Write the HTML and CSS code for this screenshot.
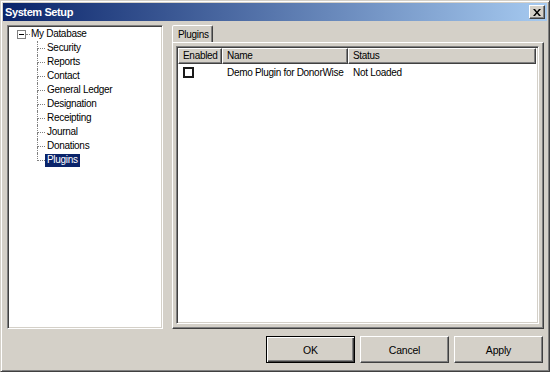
FILE: index.html
```html
<!DOCTYPE html>
<html lang="en">
<head>
  <meta charset="UTF-8">
  <title>System Setup</title>
  <link rel="stylesheet" href="styles.css">
</head>
<body>
  <div class="window">
    <div class="titlebar">
      <span class="title">System Setup</span>
      <button class="close" type="button">
        <svg width="8" height="7" viewBox="0 0 8 7">
          <path d="M0 0h2l2 2.5L6 0h2L5 3.5 8 7H6L4 4.5 2 7H0l3-3.5z" fill="#000"/>
        </svg>
      </button>
    </div>

    <div class="main">
      <div class="tree">
        <div class="root">
          <span class="expander"></span>
          <span class="stub"></span>
          <span class="label">My Database</span>
        </div>
        <ul class="children">
          <li><span class="branch"><i></i><i></i></span><span class="label">Security</span></li>
          <li><span class="branch"><i></i><i></i></span><span class="label">Reports</span></li>
          <li><span class="branch"><i></i><i></i></span><span class="label">Contact</span></li>
          <li><span class="branch"><i></i><i></i></span><span class="label">General Ledger</span></li>
          <li><span class="branch"><i></i><i></i></span><span class="label">Designation</span></li>
          <li><span class="branch"><i></i><i></i></span><span class="label">Receipting</span></li>
          <li><span class="branch"><i></i><i></i></span><span class="label">Journal</span></li>
          <li><span class="branch"><i></i><i></i></span><span class="label">Donations</span></li>
          <li class="last"><span class="branch"><i></i><i></i></span><span class="label selected">Plugins</span></li>
        </ul>
      </div>

      <div class="tabs">
        <div class="tabstrip">
          <div class="tab">Plugins</div>
        </div>
        <div class="tabpanel">
          <div class="listview">
            <div class="lv-header">
              <div class="col col-enabled">Enabled</div>
              <div class="col col-name">Name</div>
              <div class="col col-status">Status</div>
            </div>
            <div class="lv-row">
              <div class="cell col-enabled"><span class="check"></span></div>
              <div class="cell col-name">Demo Plugin for DonorWise</div>
              <div class="cell col-status">Not Loaded</div>
            </div>
          </div>
        </div>
      </div>
    </div>

    <div class="footer">
      <button class="btn default" type="button">OK</button>
      <button class="btn" type="button">Cancel</button>
      <button class="btn" type="button">Apply</button>
    </div>
  </div>
</body>
</html>
```

FILE: styles.css
```css
body {
  margin: 0;
  padding: 0;
  font-family: "Liberation Sans", Arial, sans-serif;
  font-size: 10px;
  letter-spacing: -0.3px;
  color: #000;
}

.window {
  box-sizing: border-box;
  width: 550px;
  height: 372px;
  background: #d4d0c8;
  border: 1px solid;
  border-color: #d4d0c8 #404040 #404040 #d4d0c8;
  box-shadow: inset 1px 1px #fff, inset -1px -1px #808080;
  padding: 2px;
  display: flex;
  flex-direction: column;
}

/* title bar */
.titlebar {
  height: 18px;
  display: flex;
  align-items: center;
  justify-content: space-between;
  padding: 0 2px 0 2px;
  background: linear-gradient(to right, #0a246a, #a6caf0);
}

.title {
  color: #fff;
  font-weight: bold;
  font-size: 11px;
  letter-spacing: -0.4px;
}

.close {
  width: 16px;
  height: 14px;
  padding: 0;
  margin: 0;
  background: #d4d0c8;
  border: 1px solid;
  border-color: #fff #404040 #404040 #fff;
  box-shadow: inset -1px -1px #808080;
  display: flex;
  align-items: center;
  justify-content: center;
}

/* main area */
.main {
  display: flex;
  padding: 4px 2px 0 4px;
  height: 304px;
}

.tree {
  box-sizing: border-box;
  width: 156px;
  height: 304px;
  background: #fff;
  border: 1px solid;
  border-color: #808080 #fff #fff #808080;
  box-shadow: inset 1px 1px #404040, inset -1px -1px #d4d0c8;
  padding: 1px 0 0 2px;
}

.root {
  height: 14px;
  display: flex;
  align-items: center;
  padding-left: 7px;
}

.expander {
  box-sizing: border-box;
  width: 9px;
  height: 9px;
  border: 1px solid #808080;
  background: #fff;
  display: flex;
  align-items: center;
  justify-content: center;
}

.expander::after {
  content: "";
  width: 5px;
  height: 1px;
  background: #000;
}

.stub {
  width: 4px;
  border-top: 1px dotted #808080;
}

.label {
  padding: 0 2px 1px 1px;
  line-height: 12px;
  white-space: nowrap;
}

.selected {
  background: #0a246a;
  color: #fff;
}

.children {
  list-style: none;
  margin: 0;
  padding: 0 0 0 27px;
}

.children li {
  height: 14px;
  display: flex;
  align-items: stretch;
}

.branch {
  width: 8px;
  display: flex;
  flex-direction: column;
}

.branch i {
  flex: 1;
  border-left: 1px dotted #808080;
}

.branch i:first-child {
  border-bottom: 1px dotted #808080;
}

.children li.last .branch i:last-child {
  border-left: none;
}

.children li .label {
  align-self: center;
  padding-left: 2px;
}

/* tabs */
.tabs {
  margin-left: 9px;
  width: 372px;
  display: flex;
  flex-direction: column;
}

.tabstrip {
  height: 17px;
  display: flex;
  align-items: flex-end;
}

.tab {
  box-sizing: border-box;
  width: 41px;
  height: 17px;
  border: 1px solid;
  border-bottom: none;
  border-color: #fff #404040 transparent #fff;
  border-radius: 2px 2px 0 0;
  box-shadow: inset -1px 0 #808080;
  padding: 3px 0 0 5px;
  background: #d4d0c8;
}

.tabpanel {
  box-sizing: border-box;
  flex: 1;
  border: 1px solid;
  border-color: #fff #404040 #404040 #fff;
  box-shadow: inset -1px -1px #808080;
  padding: 3px 4px 4px 3px;
  display: flex;
}

.listview {
  box-sizing: border-box;
  flex: 1;
  background: #fff;
  border: 1px solid;
  border-color: #808080 #fff #fff #808080;
  box-shadow: inset 1px 1px #404040, inset -1px -1px #d4d0c8;
  padding: 1px 2px 1px 1px;
}

.lv-header {
  display: flex;
  height: 16px;
}

.col {
  box-sizing: border-box;
  background: #d4d0c8;
  border: 1px solid;
  border-color: #fff #404040 #404040 #fff;
  box-shadow: inset -1px -1px #808080;
  padding: 1px 0 0 4px;
  line-height: 12px;
}

.col-enabled { width: 44px; }
.col-name { width: 126px; }
.col-status { flex: 1; }

.lv-row {
  display: flex;
  height: 15px;
  align-items: center;
  margin-top: 1px;
}

.cell {
  box-sizing: border-box;
  padding-left: 5px;
  white-space: nowrap;
}

.cell.col-enabled {
  display: flex;
  align-items: center;
}

.check {
  box-sizing: border-box;
  width: 11px;
  height: 11px;
  border: 2px solid #1a1a1a;
  background: #fff;
}

/* buttons */
.footer {
  display: flex;
  justify-content: flex-end;
  gap: 5px;
  padding: 7px 4px 0 0;
}

.btn {
  box-sizing: border-box;
  width: 89px;
  height: 27px;
  margin: 0;
  padding: 0;
  font-family: "Liberation Sans", Arial, sans-serif;
  font-size: 10.5px;
  letter-spacing: -0.2px;
  color: #000;
  background: #d4d0c8;
  border: 1px solid;
  border-color: #fff #404040 #404040 #fff;
  box-shadow: inset -1px -1px #808080;
}

.btn.default {
  border: 1px solid #000;
  box-shadow: inset 1px 1px #fff, inset -1px -1px #404040, inset -2px -2px #808080;
}
```
